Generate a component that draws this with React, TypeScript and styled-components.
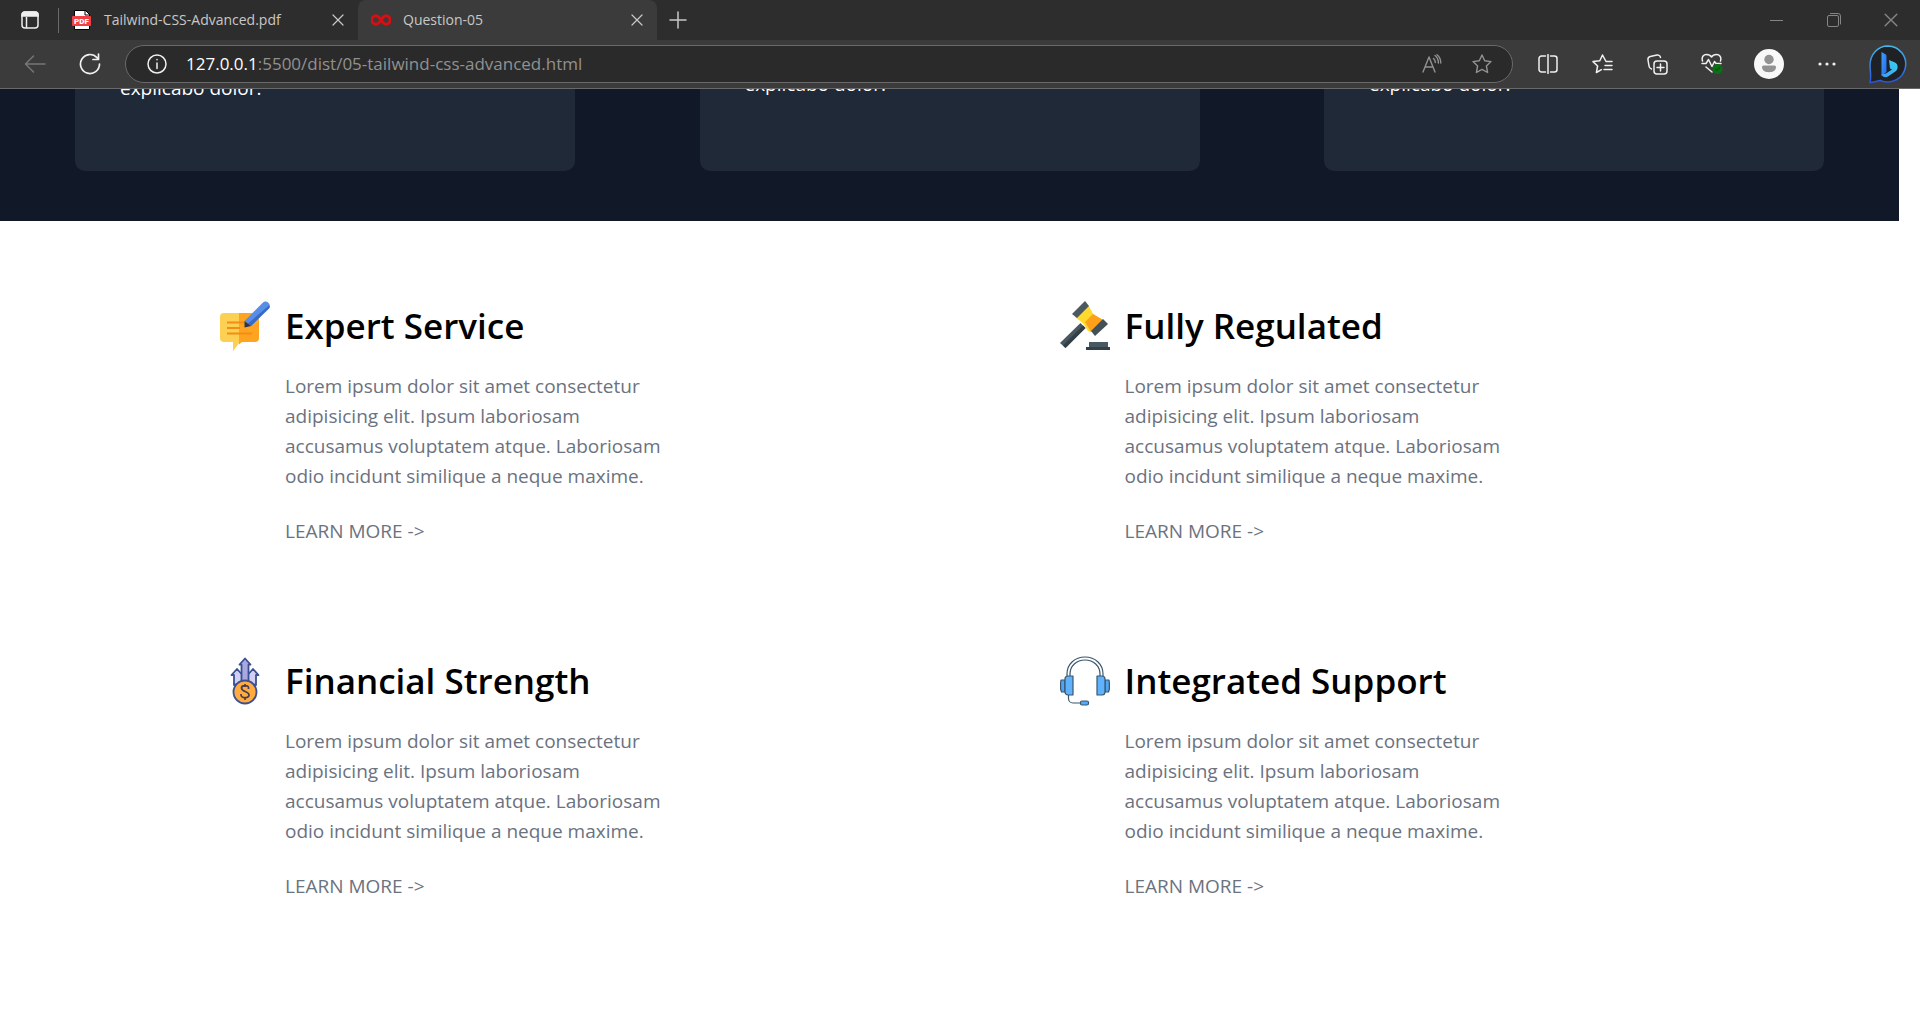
import React from "react";
import styled, { createGlobalStyle } from "styled-components";

const GlobalStyle = createGlobalStyle`
  *, *::before, *::after { box-sizing: border-box; }
  body { margin: 0; background: #fff; font-family: "Open Sans", "Noto Sans", sans-serif; }
  h2, p { margin: 0; }
  button { padding: 0; border: 0; background: none; color: inherit; font: inherit; cursor: pointer; }
  a { color: inherit; text-decoration: none; }
  svg { display: block; flex: none; }
`;

const Window = styled.div`
  display: flex;
  flex-direction: column;
  height: 100vh;
  overflow: hidden;
`;

const TabStrip = styled.header`
  display: flex;
  align-items: center;
  height: 40px;
  flex: none;
  background: #2d2d2d;
  color: #c8c8c8;
  font-size: 14px;
`;

const TabMenuButton = styled.button`
  display: grid;
  place-items: center;
  width: 58px;
  height: 40px;
  padding-left: 2px;
`;

const Divider = styled.span`
  width: 1px;
  height: 25px;
  background: #6a6a6a;
`;

const Tab = styled.div<{ $active?: boolean }>`
  display: flex;
  align-items: center;
  gap: 12px;
  width: 299px;
  height: 40px;
  padding: 0 8px 0 13px;
  border-radius: 8px 8px 0 0;
  background: ${(p) => (p.$active ? "#3b3b3b" : "transparent")};
`;

const TabTitle = styled.span`
  flex: 1;
  line-height: 20px;
  white-space: nowrap;
`;

const SmallButton = styled.button`
  display: grid;
  place-items: center;
  width: 24px;
  height: 24px;
`;

const NewTabButton = styled(SmallButton)`
  width: 42px;
`;

const WindowButtons = styled.div`
  display: flex;
  margin-left: auto;
  padding-right: 1px;
  color: #858585;
`;

const WindowButton = styled.button`
  display: grid;
  place-items: center;
  width: 57px;
  height: 40px;
`;

const Toolbar = styled.div`
  display: flex;
  align-items: center;
  height: 49px;
  flex: none;
  border-bottom: 1px solid #69696c;
  background: #3b3b3b;
  color: #f0f0f0;
`;

const NavButton = styled.button<{ $dim?: boolean }>`
  display: grid;
  place-items: center;
  width: 55px;
  height: 40px;
  color: ${(p) => (p.$dim ? "#777" : "inherit")};
`;

const NavGroup = styled.nav`
  display: flex;
  padding: 0 8px 0 7px;
`;

const AddressBar = styled.div`
  display: flex;
  flex: 1;
  align-items: center;
  height: 38px;
  padding-left: 21px;
  border: 1px solid #696969;
  border-radius: 19px;
  background: #2a2a2a;
`;

const Address = styled.a`
  flex: 1;
  padding-left: 19px;
  color: #919191;
  font-size: 17px;
  line-height: 24px;
`;

const Host = styled.span`
  color: #fff;
`;

const BarButton = styled.button`
  display: grid;
  place-items: center;
  width: 50px;
  height: 36px;
  color: #929292;
`;

const BarButtons = styled.div`
  display: flex;
  padding-right: 5px;
`;

const Actions = styled.div`
  display: flex;
  align-items: center;
  padding-left: 7px;
`;

const ActionButton = styled.button<{ $width?: number }>`
  display: grid;
  place-items: center;
  width: ${(p) => p.$width ?? 55}px;
  height: 46px;
`;

const Page = styled.main`
  flex: 1;
  min-height: 0;
  margin-right: 21px;
  overflow: hidden;
`;

const CardBand = styled.section`
  display: grid;
  grid-template-columns: repeat(3, 500px);
  justify-content: space-between;
  height: 132px;
  padding: 0 75px 50px;
  overflow: hidden;
  background: #111827;
`;

const Card = styled.article<{ $raised?: boolean }>`
  display: flex;
  align-items: flex-end;
  height: 82px;
  padding: 0 45px ${(p) => (p.$raised ? 72 : 68)}px;
  border-radius: 0 0 10px 10px;
  background: #1f2937;
  color: #fff;
  font-size: 19px;
  line-height: 30px;
`;

const FeatureGrid = styled.section`
  display: grid;
  grid-template-columns: 1fr 1fr;
  row-gap: 110px;
  padding: 80px 0 80px 220px;
`;

const Feature = styled.article`
  display: grid;
  grid-template-columns: 50px 390px;
  column-gap: 15px;
  color: #6b7280;
  font-size: 19px;
  line-height: 30px;
`;

const FeatureTitle = styled.h2`
  color: #000;
  font-size: 35px;
  font-weight: 600;
  line-height: 50px;
`;

const FeatureBody = styled.div`
  display: flex;
  flex-direction: column;
  align-items: flex-start;
  grid-column: 2;
  gap: 25px;
  padding-top: 20px;
`;

const stroke = {
  fill: "none",
  stroke: "currentColor",
  strokeLinecap: "round" as const,
  strokeLinejoin: "round" as const,
};

const CloseIcon = ({ size = 12 }: { size?: number }) => (
  <svg width={size} height={size} viewBox="0 0 12 12" {...stroke} strokeWidth="1.2">
    <path d="M1 1l10 10M11 1L1 11" />
  </svg>
);

const TabMenuIcon = () => (
  <svg width="18" height="18" viewBox="0 0 18 18" fill="none" stroke="#eee" strokeWidth="1.5">
    <rect x="1" y="1" width="16" height="16" rx="3" />
    <path d="M1 4a3 3 0 0 1 3-3h10a3 3 0 0 1 3 3v1H1z" fill="#eee" />
    <path d="M5.500 6v11" />
  </svg>
);

const PdfIcon = () => (
  <svg width="20" height="20" viewBox="0 0 20 20">
    <path d="M2.500 .5h11l4 4v15h-15z" fill="#fff" stroke="#000" />
    <path d="M13 0v5h5z" fill="#fff" stroke="#000" />
    <rect x="0" y="6" width="19" height="10" rx="1" fill="#ef4045" />
    <text x="9.500" y="14" textAnchor="middle" fontFamily="Roboto" fontSize="8" fontWeight="900" fill="#fff">PDF</text>
  </svg>
);

const InfinityIcon = () => (
  <svg width="20" height="12" viewBox="0 0 20 12" fill="none" stroke="#d90d12" strokeWidth="3">
    <path d="M10 6C8 3 7 1.800 5 1.800a4 4 0 0 0 0 8.400C7 10.200 8 9 10 6s3-4.200 5-4.200a4 4 0 0 1 0 8.400c-2 0-3-1.200-5-4.200z" />
  </svg>
);

const BackIcon = () => (
  <svg width="22" height="18" viewBox="0 0 22 18" {...stroke} strokeWidth="1.500">
    <path d="M21 9H1.500M9.500 1l-8 8 8 8" />
  </svg>
);

const ReloadIcon = () => (
  <svg width="22" height="22" viewBox="0 0 22 22" {...stroke} strokeWidth="1.700">
    <path d="M20.500 11A9.500 9.500 0 1 1 18 4.600L19.500 6M19.500 1v5.500H14" />
  </svg>
);

const InfoIcon = () => (
  <svg width="20" height="20" viewBox="0 0 20 20" {...stroke} strokeWidth="1.500">
    <circle cx="10" cy="10" r="9" />
    <path d="M10 9v5.500M10 5.500v.3" />
  </svg>
);

const ReadAloudIcon = () => (
  <svg width="20" height="20" viewBox="0 0 20 20" {...stroke} strokeWidth="1.400">
    <path d="M1 18L7 3l6 15M3 13h8M11.500 4.500c1.200 1 1.800 2.300 1.800 4M13 1.500c2.300 1.800 3.400 4 3.400 7.500" />
    <path d="M15 .8c2.500 2 3.800 4.700 3.800 8.200" />
  </svg>
);

const StarIcon = () => (
  <svg width="20" height="20" viewBox="0 0 20 20" {...stroke} strokeWidth="1.400">
    <path d="M10 1l2.700 5.800 6.300.8-4.600 4.400 1.200 6.500L10 15.400l-5.600 3.100L5.600 12 1 7.600l6.300-.8z" />
  </svg>
);

const SplitIcon = () => (
  <svg width="20" height="20" viewBox="0 0 20 20" {...stroke} strokeWidth="1.500">
    <path d="M7.500 2H3.500A2.500 2.500 0 0 0 1 4.500v11A2.500 2.500 0 0 0 3.500 18h4M12.500 2h4A2.500 2.500 0 0 1 19 4.500v11a2.500 2.500 0 0 1-2.500 2.500h-4M10 .5v19" />
  </svg>
);

const FavoritesIcon = () => (
  <svg width="21" height="20" viewBox="0 0 21 20" {...stroke} strokeWidth="1.500">
    <path d="M20 7.500h-6L10.500 1 7.800 6.800 1 7.600 5.600 12l-1.200 6.500 5-2.800M13 11.500h7M12 15.500h8" />
  </svg>
);

const CollectionsIcon = () => (
  <svg width="21" height="21" viewBox="0 0 21 21" {...stroke} strokeWidth="1.500">
    <rect x="7" y="7" width="13" height="13" rx="3" />
    <path d="M13.500 10v7M10 13.500h7M4.500 15A3.500 3.500 0 0 1 2 12L1 6a3 3 0 0 1 2.300-3.400L10 1a3 3 0 0 1 3.500 2.500" />
  </svg>
);

const HealthIcon = () => (
  <svg width="23" height="22" viewBox="0 0 23 22" {...stroke} strokeWidth="1.500">
    <path d="M1.500 8C.3 4 2.500 1.500 5.500 1.500c2.300 0 4 1 5 2.500 1-1.500 2.700-2.500 5-2.500 3 0 5.200 2.500 4 6.500M1 10.500h4l2.500-4 3.500 7 2.500-5 1.500 2h5M5 14l6 5" />
    <circle cx="16.500" cy="16" r="5" fill="#0c7014" stroke="none" />
    <path d="M14.500 16l1.500 1.500 2.700-3" stroke="#075b0d" />
  </svg>
);

const ProfileIcon = () => (
  <svg width="30" height="30" viewBox="0 0 30 30">
    <circle cx="15" cy="15" r="15" fill="#f8f8f8" />
    <circle cx="15" cy="10.500" r="4.700" fill="#929292" />
    <path d="M8 18a1.500 1.500 0 0 1 1.500-1.500h11A1.500 1.500 0 0 1 22 18c0 3.500-3 5.200-7 5.200S8 21.500 8 18z" fill="#929292" />
  </svg>
);

const MoreIcon = () => (
  <svg width="18" height="4" viewBox="0 0 18 4" fill="currentColor">
    <circle cx="2" cy="2" r="1.600" />
    <circle cx="9" cy="2" r="1.600" />
    <circle cx="16" cy="2" r="1.600" />
  </svg>
);

const BingIcon = () => (
  <svg width="40" height="40" viewBox="0 0 40 40">
    <defs>
      <linearGradient id="bubble" x1="0" y1="0" x2="0" y2="1">
        <stop offset="0" stopColor="#46b8ea" />
        <stop offset="1" stopColor="#2853d8" />
      </linearGradient>
      <linearGradient id="letter" x1="0" y1="0" x2="1" y2="1">
        <stop offset="0" stopColor="#3da0f7" />
        <stop offset="1" stopColor="#246af0" />
      </linearGradient>
      <linearGradient id="bowl" x1="0" y1="1" x2="1" y2="0">
        <stop offset="0" stopColor="#3f9af5" />
        <stop offset="1" stopColor="#35d5ee" />
      </linearGradient>
    </defs>
    <path d="M20 2a18 18 0 1 1-7.500 34.500C9 37 5 38.500 2 38.500c1.400-4 .4-10 0-17C2 10 10 2 20 2z" fill="#202124" stroke="url(#bubble)" strokeWidth="1.500" />
    <path d="M13.500 8l4 2.200q1 .6 1 1.800v16l-5 4z" fill="url(#letter)" />
    <path d="M21 16l6 2.500c3 1.500 3.500 6 1 8.500l-8 5.500c-2.500 1.500-5.500.8-6.500-2l4.500-1 6-4-2-1z" fill="url(#bowl)" />
  </svg>
);

const ServiceIcon = () => (
  <svg width="50" height="50" viewBox="0 0 50 50">
    <path d="M4 12h16v29l-7 9v-9H4a4 4 0 0 1-4-4V16a4 4 0 0 1 4-4z" fill="#fcd052" />
    <path d="M19 12h16a4 4 0 0 1 4 4v21a4 4 0 0 1-4 4H22l-3 2.500z" fill="#ffa421" />
    <path d="M7 21.500h17M7 27h13M7 32.500h25" stroke="#f28d15" strokeWidth="2.200" />
    <path d="M24.500 20L43 1.500c3-3 9 2 6 5.500L31 25z" fill="#568ee8" />
    <path d="M28 22.500L49 4.500c1.300 1 .8 2.200 0 3L31 25z" fill="#3769c8" />
    <path d="M24.500 20l6.500 5-6.500 1.500z" fill="#273457" />
  </svg>
);

const GavelIcon = () => (
  <svg width="50" height="50" viewBox="0 0 50 50">
    <path d="M20.500 22l5 5L5.500 47 0 42z" fill="#47565f" />
    <path d="M23 24.500l2.500 2.500L5.500 47 3 44.500z" fill="#323f46" />
    <path d="M16 16L28 4l6 11-8 10z" fill="#ffda2d" />
    <path d="M25 5l3-1 5 9 10 6-12 12-3-1-5-8-8-6z" fill="#ffda2d" />
    <path d="M33 13l10 6-12 12-6-10z" fill="#fea019" />
    <path d="M12 13L25 0l4 5-12 12z" fill="#4b5960" />
    <path d="M31 30l12-12 5 5-13 12z" fill="#425159" />
    <path d="M29 41h19v6H29z" fill="#485963" />
    <path d="M26 46h24v3H26z" fill="#344048" />
  </svg>
);

const FinanceIcon = () => (
  <svg width="50" height="50" viewBox="0 0 50 50">
    <g stroke="#3b4f92" strokeWidth="1.800" strokeLinejoin="round">
      <path d="M14 29V19h-2.500l5.500-6 5.500 6v8zM36 29V19h2.500L33 13l-5.500 6v8z" fill="#cfd0f3" />
      <path d="M21.500 26V8.500H19.500L25 2.500l5.500 6h-2V26z" fill="#a9a9df" />
      <circle cx="25" cy="36" r="11.500" fill="#ffab3f" />
    </g>
    <path d="M28.500 33v-1.500c0-2.500-7-2.500-7 .5 0 4 7.500 3 7.500 7 0 3.500-7.500 3.500-8 0v-1M25 28v3m0 10v3" fill="none" stroke="#453c4d" strokeWidth="1.700" />
  </svg>
);

const HeadsetIcon = () => (
  <svg width="50" height="50" viewBox="0 0 50 50" fill="none" stroke="#3b566d" strokeWidth="1.200" strokeLinejoin="round">
    <path d="M7 21v-3C7 8 15 1 25 1s18 7 18 17v3h-3v-3c0-8-6.500-14-15-14S10 10 10 18v3z" fill="#fff" />
    <path d="M1 24h4v12H1.500L.6 33v-6zM49 24h-4v12h3.500l.9-3v-6z" fill="#4da5f3" />
    <path d="M8 20h5v19H8a3 3 0 0 1-3-3V23a3 3 0 0 1 3-3zM42 20h-5v19h5a3 3 0 0 0 3-3V23a3 3 0 0 0-3-3z" fill="#60b2ff" />
    <path d="M8.500 39v3.500A4.500 4.500 0 0 0 13 47h8" />
    <rect x="20.500" y="45" width="8" height="4" rx="1.500" fill="#55aafa" />
  </svg>
);

const description =
  "Lorem ipsum dolor sit amet consectetur adipisicing elit. Ipsum laboriosam accusamus voluptatem atque. Laboriosam odio incidunt similique a neque maxime.";

const features = [
  { title: "Expert Service", icon: <ServiceIcon /> },
  { title: "Fully Regulated", icon: <GavelIcon /> },
  { title: "Financial Strength", icon: <FinanceIcon /> },
  { title: "Integrated Support", icon: <HeadsetIcon /> },
];

export default function App() {
  return (
    <Window>
      <GlobalStyle />
      <TabStrip>
        <TabMenuButton aria-label="Tab actions"><TabMenuIcon /></TabMenuButton>
        <Divider />
        <Tab>
          <PdfIcon />
          <TabTitle>Tailwind-CSS-Advanced.pdf</TabTitle>
          <SmallButton aria-label="Close tab"><CloseIcon /></SmallButton>
        </Tab>
        <Tab $active>
          <InfinityIcon />
          <TabTitle>Question-05</TabTitle>
          <SmallButton aria-label="Close tab"><CloseIcon /></SmallButton>
        </Tab>
        <NewTabButton aria-label="New tab">
          <svg width="18" height="18" viewBox="0 0 18 18" {...stroke} strokeWidth="1.500"><path d="M9 1v16M1 9h16" /></svg>
        </NewTabButton>
        <WindowButtons>
          <WindowButton aria-label="Minimize">
            <svg width="13" height="13" viewBox="0 0 13 13" {...stroke}><path d="M0 6.500h13" /></svg>
          </WindowButton>
          <WindowButton aria-label="Restore">
            <svg width="14" height="14" viewBox="0 0 14 14" {...stroke}><rect x=".5" y="2.500" width="11" height="11" rx="1.500" /><path d="M3.500 .5H11A2.500 2.500 0 0 1 13.500 3v8" /></svg>
          </WindowButton>
          <WindowButton aria-label="Close"><CloseIcon size={14} /></WindowButton>
        </WindowButtons>
      </TabStrip>
      <Toolbar>
        <NavGroup>
          <NavButton $dim aria-label="Back"><BackIcon /></NavButton>
          <NavButton aria-label="Reload"><ReloadIcon /></NavButton>
        </NavGroup>
        <AddressBar>
          <InfoIcon />
          <Address href="#"><Host>127.0.0.1</Host>:5500/dist/05-tailwind-css-advanced.html</Address>
          <BarButtons>
            <BarButton aria-label="Read aloud"><ReadAloudIcon /></BarButton>
            <BarButton aria-label="Add to favorites"><StarIcon /></BarButton>
          </BarButtons>
        </AddressBar>
        <Actions>
          <ActionButton aria-label="Split screen"><SplitIcon /></ActionButton>
          <ActionButton aria-label="Favorites"><FavoritesIcon /></ActionButton>
          <ActionButton aria-label="Collections"><CollectionsIcon /></ActionButton>
          <ActionButton aria-label="Browser essentials"><HealthIcon /></ActionButton>
          <ActionButton $width={58} aria-label="Profile"><ProfileIcon /></ActionButton>
          <ActionButton $width={58} aria-label="More"><MoreIcon /></ActionButton>
          <ActionButton $width={64} aria-label="Bing chat"><BingIcon /></ActionButton>
        </Actions>
      </Toolbar>
      <Page>
        <CardBand>
          <Card><p>explicabo dolor.</p></Card>
          <Card $raised><p>explicabo dolor.</p></Card>
          <Card $raised><p>explicabo dolor.</p></Card>
        </CardBand>
        <FeatureGrid>
          {features.map((f) => (
            <Feature key={f.title}>
              {f.icon}
              <FeatureTitle>{f.title}</FeatureTitle>
              <FeatureBody>
                <p>{description}</p>
                <a href="#">LEARN MORE -&gt;</a>
              </FeatureBody>
            </Feature>
          ))}
        </FeatureGrid>
      </Page>
    </Window>
  );
}
